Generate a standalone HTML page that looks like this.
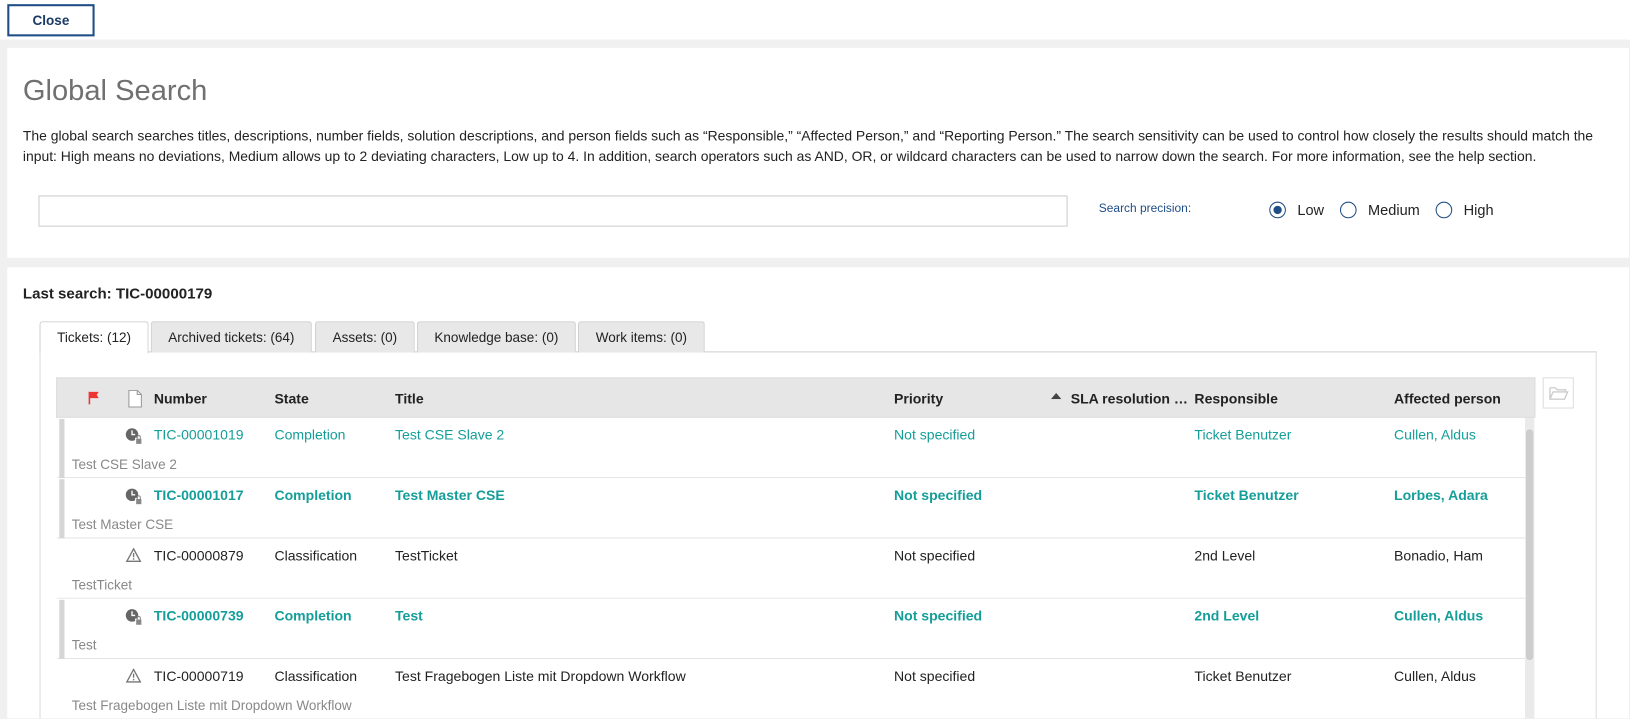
<!DOCTYPE html>
<html><head><meta charset="utf-8"><style>
*{box-sizing:border-box;margin:0;padding:0}
html,body{width:1630px;height:719px;overflow:hidden;background:#f0f0f0}
body{font-family:"Liberation Sans",Arial,sans-serif;color:#222;position:relative}
#w{position:absolute;left:0;top:0;width:1568px;height:691px;overflow:hidden;transform:scale(1.03954);transform-origin:0 0}
.abs{position:absolute}
.top{left:0;top:0;width:1568px;height:38px;background:#fff}
.close{left:7px;top:4px;width:84px;height:31px;border:2px solid #1f4e87;font-size:13px;font-weight:bold;color:#1a3a66;text-align:center;line-height:27px}
.p1{left:7px;top:46px;width:1560px;height:202px;background:#fff}
.p2{left:7px;top:257px;width:1560px;height:434px;background:#fff}
h1{position:absolute;left:22px;top:71px;font-size:28px;font-weight:normal;color:#707070}
.desc{left:22px;top:121px;font-size:13.4px;line-height:20px;color:#222;white-space:nowrap}
.inp{left:37px;top:188px;width:990px;height:30px;border:1px solid #ccc}
.sp{left:1057px;top:195px;font-size:11.5px;color:#1f4e87}
.rad{top:194px;width:16px;height:16px;border:1.5px solid #1f4e87;border-radius:50%}
.rad.on::after{content:"";position:absolute;left:2.5px;top:2.5px;width:8px;height:8px;border-radius:50%;background:#1f4e87}
.rl{top:194px;font-size:14px;color:#222}
.ls{left:22px;top:275px;font-size:14.5px;font-weight:bold}
.tab{top:309px;height:30px;border:1px solid #d0d0d0;border-bottom:none;background:#e8e8e8;font-size:13px;text-align:center;line-height:29px;border-radius:3px 3px 0 0}
.box{left:38px;top:338px;width:1498px;height:400px;border:1px solid #ddd;border-top-color:#d0d0d0}
.thead{left:54px;top:363px;width:1423px;height:39px;background:#e6e6e6;border:1px solid #ddd}
.th{top:376px;font-size:13.5px;font-weight:bold;color:#222;white-space:nowrap}
.row{left:55px;width:1412px;height:58px;border-bottom:1px solid #e4e4e4;background:#fff}
.bar{left:57px;width:5px;height:57px;background:#d6d6d6}
.c{font-size:13.5px;white-space:nowrap}
.t{color:#159e99}
.b{font-weight:bold}
.sub{font-size:13px;color:#888}
.sb{left:1467px;top:402px;width:9px;height:320px;background:#eaeaea}
.sbt{left:1468px;top:413px;width:7px;height:222px;background:#cdcdcd;border-radius:4px}
.fb{left:1484px;top:363px;width:30px;height:30px;border:1px solid #ddd;background:#fff}
</style></head><body><div id="w">
<div class="abs top"></div>
<div class="abs close">Close</div>
<div class="abs p1"></div>
<div class="abs p2"></div>
<h1>Global Search</h1>
<div class="abs desc">The global search searches titles, descriptions, number fields, solution descriptions, and person fields such as “Responsible,” “Affected Person,” and “Reporting Person.” The search sensitivity can be used to control how closely the results should match the<br>input: High means no deviations, Medium allows up to 2 deviating characters, Low up to 4. In addition, search operators such as AND, OR, or wildcard characters can be used to narrow down the search. For more information, see the help section.</div>
<div class="abs inp"></div>
<div class="abs sp">Search precision:</div>
<div class="abs rad on" style="left:1221px"></div><div class="abs rl" style="left:1248px">Low</div>
<div class="abs rad" style="left:1289px"></div><div class="abs rl" style="left:1316px">Medium</div>
<div class="abs rad" style="left:1381px"></div><div class="abs rl" style="left:1408px">High</div>
<div class="abs ls">Last search: TIC-00000179</div>
<div class="abs box"></div>
<div class="abs tab" style="left:38px;width:105px;background:#fff;height:31px">Tickets: (12)</div>
<div class="abs tab" style="left:145px;width:155px">Archived tickets: (64)</div>
<div class="abs tab" style="left:303px;width:96px">Assets: (0)</div>
<div class="abs tab" style="left:401px;width:153px">Knowledge base: (0)</div>
<div class="abs tab" style="left:556px;width:122px">Work items: (0)</div>
<div class="abs thead"></div>
<svg class="abs" style="left:84px;top:376px" width="14" height="14"><path d="M2 1v12" stroke="#e33" stroke-width="1.5"/><path d="M2 1h9l-2 3 2 3H2z" fill="#e33"/></svg>
<svg class="abs" style="left:123px;top:375px" width="14" height="17"><path d="M1 .5h8l4 4v12H1z" fill="#fff" stroke="#999"/><path d="M9 .5v4h4" fill="none" stroke="#999"/></svg>
<div class="abs th" style="left:148px">Number</div>
<div class="abs th" style="left:264px">State</div>
<div class="abs th" style="left:380px">Title</div>
<div class="abs th" style="left:860px">Priority</div>
<svg class="abs" style="left:1011px;top:378px" width="10" height="6"><path d="M0 6L5 0 10 6z" fill="#444"/></svg>
<div class="abs th" style="left:1030px;width:113px;overflow:hidden;text-overflow:ellipsis">SLA resolution time</div>
<div class="abs th" style="left:1149px">Responsible</div>
<div class="abs th" style="left:1341px">Affected person</div>
<div class="abs fb"><svg style="position:absolute;left:5px;top:7px" width="19" height="14"><path d="M1 2h5l2 2h8v2M1 2v11h14l3-7H4L1 13" fill="none" stroke="#ccc" stroke-width="1.3"/></svg></div>

<div class="abs row" style="top:402px"></div><div class="abs bar" style="top:403px"></div>
<div class="abs row" style="top:460px"></div><div class="abs bar" style="top:461px"></div>
<div class="abs row" style="top:518px"></div>
<div class="abs row" style="top:576px"></div><div class="abs bar" style="top:577px"></div>
<div class="abs row" style="top:634px"></div>

<div class="abs sb"></div><div class="abs sbt"></div>

<svg class="abs" style="left:120px;top:411px" width="18" height="18"><circle cx="7" cy="7" r="6" fill="#666"/><path d="M7 3v4h3" stroke="#fff" stroke-width="1.3" fill="none"/><rect x="10" y="10" width="7" height="6" fill="#fff"/><rect x="11" y="11" width="5" height="5" fill="#888"/><path d="M12 11V9.5a1.5 1.5 0 013 0V11" stroke="#888" fill="none"/></svg>
<div class="abs c t" style="left:148px;top:411px">TIC-00001019</div>
<div class="abs c t" style="left:264px;top:411px">Completion</div>
<div class="abs c t" style="left:380px;top:411px">Test CSE Slave 2</div>
<div class="abs c t" style="left:860px;top:411px">Not specified</div>
<div class="abs c t" style="left:1149px;top:411px">Ticket Benutzer</div>
<div class="abs c t" style="left:1341px;top:411px">Cullen, Aldus</div>
<div class="abs sub" style="left:69px;top:439px">Test CSE Slave 2</div>

<svg class="abs" style="left:120px;top:469px" width="18" height="18"><circle cx="7" cy="7" r="6" fill="#666"/><path d="M7 3v4h3" stroke="#fff" stroke-width="1.3" fill="none"/><rect x="10" y="10" width="7" height="6" fill="#fff"/><rect x="11" y="11" width="5" height="5" fill="#888"/><path d="M12 11V9.5a1.5 1.5 0 013 0V11" stroke="#888" fill="none"/></svg>
<div class="abs c t b" style="left:148px;top:469px">TIC-00001017</div>
<div class="abs c t b" style="left:264px;top:469px">Completion</div>
<div class="abs c t b" style="left:380px;top:469px">Test Master CSE</div>
<div class="abs c t b" style="left:860px;top:469px">Not specified</div>
<div class="abs c t b" style="left:1149px;top:469px">Ticket Benutzer</div>
<div class="abs c t b" style="left:1341px;top:469px">Lorbes, Adara</div>
<div class="abs sub" style="left:69px;top:497px">Test Master CSE</div>

<svg class="abs" style="left:121px;top:527px" width="15" height="14"><path d="M7.5 1L14 13H1z" fill="none" stroke="#777" stroke-width="1.3"/><path d="M7.5 5v4M7.5 10v1.5" stroke="#777" stroke-width="1.3"/></svg>
<div class="abs c" style="left:148px;top:527px">TIC-00000879</div>
<div class="abs c" style="left:264px;top:527px">Classification</div>
<div class="abs c" style="left:380px;top:527px">TestTicket</div>
<div class="abs c" style="left:860px;top:527px">Not specified</div>
<div class="abs c" style="left:1149px;top:527px">2nd Level</div>
<div class="abs c" style="left:1341px;top:527px">Bonadio, Ham</div>
<div class="abs sub" style="left:69px;top:555px">TestTicket</div>

<svg class="abs" style="left:120px;top:585px" width="18" height="18"><circle cx="7" cy="7" r="6" fill="#666"/><path d="M7 3v4h3" stroke="#fff" stroke-width="1.3" fill="none"/><rect x="10" y="10" width="7" height="6" fill="#fff"/><rect x="11" y="11" width="5" height="5" fill="#888"/><path d="M12 11V9.5a1.5 1.5 0 013 0V11" stroke="#888" fill="none"/></svg>
<div class="abs c t b" style="left:148px;top:585px">TIC-00000739</div>
<div class="abs c t b" style="left:264px;top:585px">Completion</div>
<div class="abs c t b" style="left:380px;top:585px">Test</div>
<div class="abs c t b" style="left:860px;top:585px">Not specified</div>
<div class="abs c t b" style="left:1149px;top:585px">2nd Level</div>
<div class="abs c t b" style="left:1341px;top:585px">Cullen, Aldus</div>
<div class="abs sub" style="left:69px;top:613px">Test</div>

<svg class="abs" style="left:121px;top:643px" width="15" height="14"><path d="M7.5 1L14 13H1z" fill="none" stroke="#777" stroke-width="1.3"/><path d="M7.5 5v4M7.5 10v1.5" stroke="#777" stroke-width="1.3"/></svg>
<div class="abs c" style="left:148px;top:643px">TIC-00000719</div>
<div class="abs c" style="left:264px;top:643px">Classification</div>
<div class="abs c" style="left:380px;top:643px">Test Fragebogen Liste mit Dropdown Workflow</div>
<div class="abs c" style="left:860px;top:643px">Not specified</div>
<div class="abs c" style="left:1149px;top:643px">Ticket Benutzer</div>
<div class="abs c" style="left:1341px;top:643px">Cullen, Aldus</div>
<div class="abs sub" style="left:69px;top:671px">Test Fragebogen Liste mit Dropdown Workflow</div>
</div></body></html>
